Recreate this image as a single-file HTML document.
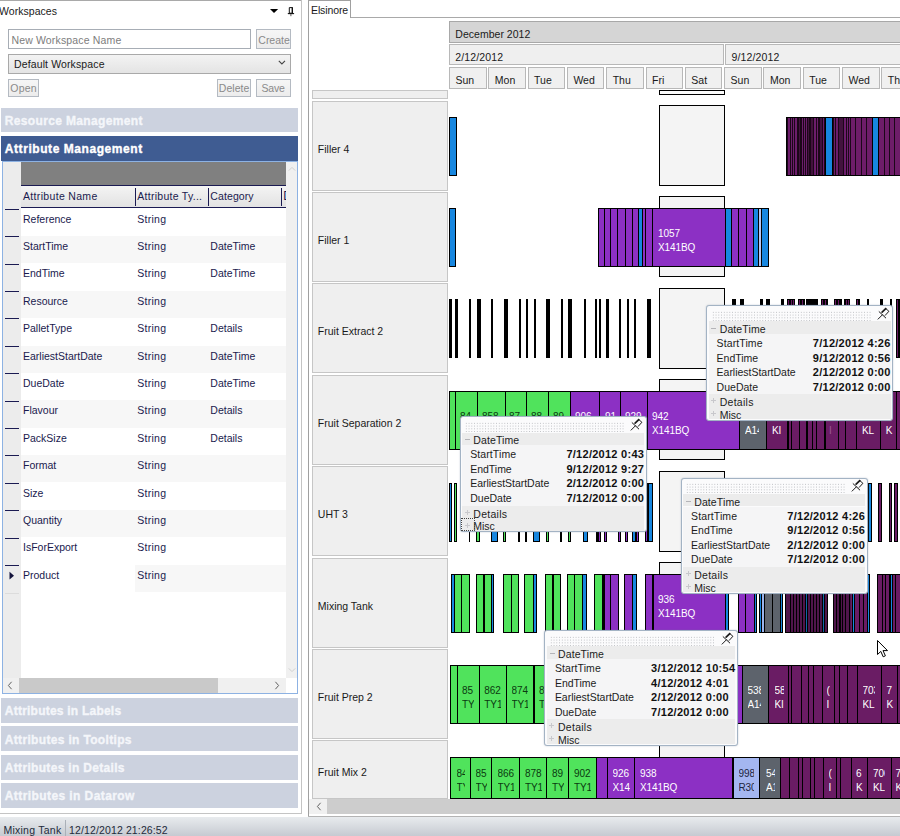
<!DOCTYPE html>
<html><head><meta charset="utf-8"><title>Elsinore</title>
<style>
html,body{margin:0;padding:0}
body{width:900px;height:836px;position:relative;overflow:hidden;background:#fff;font-family:"Liberation Sans",sans-serif;font-size:12px}
body div,body svg{position:absolute}
</style></head><body>
<div style="left:0.00px;top:0.00px;width:302.00px;height:1.00px;background:#a9a9a9;"></div>
<div style="left:301.00px;top:0.00px;width:1.00px;height:814.00px;background:#c4c4c4;"></div>
<div style="left:0.00px;top:813.00px;width:302.00px;height:1.00px;background:#c4c4c4;"></div>
<div style="left:-1.00px;top:3.75px;height:14px;line-height:14px;font-size:10.5px;letter-spacing:0.042px;color:#1a1a1a;white-space:nowrap;">Workspaces</div>
<svg style="left:270px;top:8px" width="10" height="6" viewBox="0 0 10 6"><path d="M-0.2 0.9 L8.2 0.9 L4 5 Z" fill="#000"/></svg>
<svg style="left:287px;top:6px" width="8" height="12" viewBox="0 0 8 12"><path d="M2.3 1.6 H5.5 V7.2 H2.3 Z" fill="none" stroke="#111" stroke-width="1"/><path d="M5.3 1.4 V7.2" stroke="#111" stroke-width="1.4"/><path d="M0.8 7.6 H7.1" stroke="#111" stroke-width="1.1"/><path d="M3.9 8 V10.2" stroke="#555" stroke-width="1"/></svg>
<div style="left:8.00px;top:29.00px;width:243.00px;height:19.50px;background:#fff;border:1px solid #a7adb5;box-sizing:border-box;"></div>
<div style="left:11.40px;top:33.05px;height:14px;line-height:14px;font-size:10.5px;letter-spacing:0.157px;color:#7d7d7d;white-space:nowrap;">New Workspace Name</div>
<div style="left:256.00px;top:29.00px;width:34.70px;height:19.50px;border:1px solid #b4bac2;box-sizing:border-box;background:linear-gradient(#f6f6f6,#ececec);"></div>
<div style="left:258.30px;top:32.65px;height:14px;line-height:14px;font-size:10.5px;letter-spacing:-0.002px;color:#8a8a8a;white-space:nowrap;">Create</div>
<div style="left:8.00px;top:54.30px;width:282.70px;height:19.40px;border:1px solid #a9a9a9;box-sizing:border-box;background:linear-gradient(#f3f3f3,#e4e4e4);"></div>
<div style="left:14.00px;top:57.05px;height:14px;line-height:14px;font-size:10.5px;letter-spacing:0.123px;color:#1a1a1a;white-space:nowrap;">Default Workspace</div>
<svg style="left:278px;top:60px" width="8" height="6" viewBox="0 0 8 6"><path d="M0.8 0.8 L3.9 3.9 L7 0.8" fill="none" stroke="#444" stroke-width="1.1"/></svg>
<div style="left:8.00px;top:78.60px;width:31.00px;height:18.20px;border:1px solid #b4bac2;box-sizing:border-box;background:linear-gradient(#f6f6f6,#ececec);"></div>
<div style="left:10.30px;top:81.35px;height:14px;line-height:14px;font-size:10.5px;letter-spacing:0.204px;color:#8a8a8a;white-space:nowrap;">Open</div>
<div style="left:216.60px;top:78.60px;width:34.40px;height:18.20px;border:1px solid #b4bac2;box-sizing:border-box;background:linear-gradient(#f6f6f6,#ececec);"></div>
<div style="left:218.80px;top:81.35px;height:14px;line-height:14px;font-size:10.5px;letter-spacing:0.025px;color:#8a8a8a;white-space:nowrap;">Delete</div>
<div style="left:256.20px;top:78.60px;width:34.50px;height:18.20px;border:1px solid #b4bac2;box-sizing:border-box;background:linear-gradient(#f6f6f6,#ececec);"></div>
<div style="left:261.50px;top:81.35px;height:14px;line-height:14px;font-size:10.5px;letter-spacing:-0.233px;color:#8a8a8a;white-space:nowrap;">Save</div>
<div style="left:1.00px;top:108.00px;width:297.00px;height:24.00px;background:#ccd2df;"></div>
<div style="left:4.80px;top:112.90px;height:16px;line-height:16px;font-size:12px;letter-spacing:0.349px;color:#f4f6fa;white-space:nowrap;font-weight:bold;-webkit-text-stroke:0.35px;">Resource Management</div>
<div style="left:1.00px;top:136.00px;width:297.00px;height:25.00px;background:#3f5c92;"></div>
<div style="left:4.80px;top:141.40px;height:16px;line-height:16px;font-size:12px;letter-spacing:0.566px;color:#fff;white-space:nowrap;font-weight:bold;-webkit-text-stroke:0.35px;">Attribute Management</div>
<div style="left:1.00px;top:698.00px;width:297.00px;height:25.00px;background:#ccd2df;"></div>
<div style="left:4.80px;top:703.40px;height:16px;line-height:16px;font-size:12px;letter-spacing:0.224px;color:#f4f6fa;white-space:nowrap;font-weight:bold;-webkit-text-stroke:0.35px;">Attributes in Labels</div>
<div style="left:1.00px;top:726.30px;width:297.00px;height:25.00px;background:#ccd2df;"></div>
<div style="left:4.80px;top:731.70px;height:16px;line-height:16px;font-size:12px;letter-spacing:0.329px;color:#f4f6fa;white-space:nowrap;font-weight:bold;-webkit-text-stroke:0.35px;">Attributes in Tooltips</div>
<div style="left:1.00px;top:754.60px;width:297.00px;height:25.00px;background:#ccd2df;"></div>
<div style="left:4.80px;top:760.00px;height:16px;line-height:16px;font-size:12px;letter-spacing:0.317px;color:#f4f6fa;white-space:nowrap;font-weight:bold;-webkit-text-stroke:0.35px;">Attributes in Details</div>
<div style="left:1.00px;top:782.90px;width:297.00px;height:25.00px;background:#ccd2df;"></div>
<div style="left:4.80px;top:788.30px;height:16px;line-height:16px;font-size:12px;letter-spacing:0.412px;color:#f4f6fa;white-space:nowrap;font-weight:bold;-webkit-text-stroke:0.35px;">Attributes in Datarow</div>
<div style="left:2.00px;top:161.00px;width:296.00px;height:533.00px;background:#fff;border:1px solid #8db2e3;box-sizing:border-box;"></div>
<div style="left:3.00px;top:162.00px;width:18.00px;height:516.00px;background:#ececec;"></div>
<div style="left:21.00px;top:162.00px;width:265.00px;height:23.30px;background:#808080;"></div>
<div style="left:21.00px;top:185.30px;width:265.00px;height:1.00px;background:#1a1a52;"></div>
<div style="left:21.00px;top:186.30px;width:265.00px;height:21.00px;background:linear-gradient(#f4f4f4,#e2e2e2);"></div>
<div style="left:21.00px;top:207.30px;width:265.00px;height:1.20px;background:#1a1a52;"></div>
<div style="left:135.00px;top:188.00px;width:1.00px;height:17.60px;background:#1a1a52;"></div>
<div style="left:207.80px;top:188.00px;width:1.00px;height:17.60px;background:#1a1a52;"></div>
<div style="left:281.00px;top:188.00px;width:1.00px;height:17.60px;background:#1a1a52;"></div>
<div style="left:23.00px;top:189.35px;height:14px;line-height:14px;font-size:10.5px;letter-spacing:0.327px;color:#1a1a4e;white-space:nowrap;">Attribute Name</div>
<div style="left:137.30px;top:189.35px;height:14px;line-height:14px;font-size:10.5px;letter-spacing:0.274px;color:#1a1a4e;white-space:nowrap;">Attribute Ty...</div>
<div style="left:210.30px;top:189.35px;height:14px;line-height:14px;font-size:10.5px;letter-spacing:0.100px;color:#1a1a4e;white-space:nowrap;">Category</div>
<div style="left:283px;top:188px;width:3px;height:16px;overflow:hidden"><div style="position:absolute;left:0.3px;top:0;line-height:16px;font-size:12px;color:#1a1a4e">D</div></div>
<div style="left:5.00px;top:209.00px;width:14.00px;height:1.00px;background:#1a1a52;"></div>
<div style="left:23.00px;top:211.65px;height:14px;line-height:14px;font-size:10.5px;letter-spacing:0.000px;color:#1a1a4e;white-space:nowrap;">Reference</div>
<div style="left:137.30px;top:211.65px;height:14px;line-height:14px;font-size:10.5px;letter-spacing:0.262px;color:#1a1a4e;white-space:nowrap;">String</div>
<div style="left:21.00px;top:235.90px;width:265.00px;height:27.40px;background:#f7f7f7;"></div>
<div style="left:5.00px;top:236.00px;width:14.00px;height:1.00px;background:#1a1a52;"></div>
<div style="left:23.00px;top:239.05px;height:14px;line-height:14px;font-size:10.5px;letter-spacing:0.000px;color:#1a1a4e;white-space:nowrap;">StartTime</div>
<div style="left:137.30px;top:239.05px;height:14px;line-height:14px;font-size:10.5px;letter-spacing:0.262px;color:#1a1a4e;white-space:nowrap;">String</div>
<div style="left:210.30px;top:239.05px;height:14px;line-height:14px;font-size:10.5px;letter-spacing:0.000px;color:#1a1a4e;white-space:nowrap;">DateTime</div>
<div style="left:5.00px;top:264.00px;width:14.00px;height:1.00px;background:#1a1a52;"></div>
<div style="left:23.00px;top:266.45px;height:14px;line-height:14px;font-size:10.5px;letter-spacing:0.000px;color:#1a1a4e;white-space:nowrap;">EndTime</div>
<div style="left:137.30px;top:266.45px;height:14px;line-height:14px;font-size:10.5px;letter-spacing:0.262px;color:#1a1a4e;white-space:nowrap;">String</div>
<div style="left:210.30px;top:266.45px;height:14px;line-height:14px;font-size:10.5px;letter-spacing:0.000px;color:#1a1a4e;white-space:nowrap;">DateTime</div>
<div style="left:21.00px;top:290.70px;width:265.00px;height:27.40px;background:#f7f7f7;"></div>
<div style="left:5.00px;top:291.00px;width:14.00px;height:1.00px;background:#1a1a52;"></div>
<div style="left:23.00px;top:293.85px;height:14px;line-height:14px;font-size:10.5px;letter-spacing:0.000px;color:#1a1a4e;white-space:nowrap;">Resource</div>
<div style="left:137.30px;top:293.85px;height:14px;line-height:14px;font-size:10.5px;letter-spacing:0.262px;color:#1a1a4e;white-space:nowrap;">String</div>
<div style="left:5.00px;top:318.00px;width:14.00px;height:1.00px;background:#1a1a52;"></div>
<div style="left:23.00px;top:321.25px;height:14px;line-height:14px;font-size:10.5px;letter-spacing:0.000px;color:#1a1a4e;white-space:nowrap;">PalletType</div>
<div style="left:137.30px;top:321.25px;height:14px;line-height:14px;font-size:10.5px;letter-spacing:0.262px;color:#1a1a4e;white-space:nowrap;">String</div>
<div style="left:210.30px;top:321.25px;height:14px;line-height:14px;font-size:10.5px;letter-spacing:0.000px;color:#1a1a4e;white-space:nowrap;">Details</div>
<div style="left:21.00px;top:345.50px;width:265.00px;height:27.40px;background:#f7f7f7;"></div>
<div style="left:5.00px;top:346.00px;width:14.00px;height:1.00px;background:#1a1a52;"></div>
<div style="left:23.00px;top:348.65px;height:14px;line-height:14px;font-size:10.5px;letter-spacing:0.000px;color:#1a1a4e;white-space:nowrap;">EarliestStartDate</div>
<div style="left:137.30px;top:348.65px;height:14px;line-height:14px;font-size:10.5px;letter-spacing:0.262px;color:#1a1a4e;white-space:nowrap;">String</div>
<div style="left:210.30px;top:348.65px;height:14px;line-height:14px;font-size:10.5px;letter-spacing:0.000px;color:#1a1a4e;white-space:nowrap;">DateTime</div>
<div style="left:5.00px;top:373.00px;width:14.00px;height:1.00px;background:#1a1a52;"></div>
<div style="left:23.00px;top:376.05px;height:14px;line-height:14px;font-size:10.5px;letter-spacing:0.000px;color:#1a1a4e;white-space:nowrap;">DueDate</div>
<div style="left:137.30px;top:376.05px;height:14px;line-height:14px;font-size:10.5px;letter-spacing:0.262px;color:#1a1a4e;white-space:nowrap;">String</div>
<div style="left:210.30px;top:376.05px;height:14px;line-height:14px;font-size:10.5px;letter-spacing:0.000px;color:#1a1a4e;white-space:nowrap;">DateTime</div>
<div style="left:21.00px;top:400.30px;width:265.00px;height:27.40px;background:#f7f7f7;"></div>
<div style="left:5.00px;top:401.00px;width:14.00px;height:1.00px;background:#1a1a52;"></div>
<div style="left:23.00px;top:403.45px;height:14px;line-height:14px;font-size:10.5px;letter-spacing:0.000px;color:#1a1a4e;white-space:nowrap;">Flavour</div>
<div style="left:137.30px;top:403.45px;height:14px;line-height:14px;font-size:10.5px;letter-spacing:0.262px;color:#1a1a4e;white-space:nowrap;">String</div>
<div style="left:210.30px;top:403.45px;height:14px;line-height:14px;font-size:10.5px;letter-spacing:0.000px;color:#1a1a4e;white-space:nowrap;">Details</div>
<div style="left:5.00px;top:428.00px;width:14.00px;height:1.00px;background:#1a1a52;"></div>
<div style="left:23.00px;top:430.85px;height:14px;line-height:14px;font-size:10.5px;letter-spacing:0.000px;color:#1a1a4e;white-space:nowrap;">PackSize</div>
<div style="left:137.30px;top:430.85px;height:14px;line-height:14px;font-size:10.5px;letter-spacing:0.262px;color:#1a1a4e;white-space:nowrap;">String</div>
<div style="left:210.30px;top:430.85px;height:14px;line-height:14px;font-size:10.5px;letter-spacing:0.000px;color:#1a1a4e;white-space:nowrap;">Details</div>
<div style="left:21.00px;top:455.10px;width:265.00px;height:27.40px;background:#f7f7f7;"></div>
<div style="left:5.00px;top:455.00px;width:14.00px;height:1.00px;background:#1a1a52;"></div>
<div style="left:23.00px;top:458.25px;height:14px;line-height:14px;font-size:10.5px;letter-spacing:0.000px;color:#1a1a4e;white-space:nowrap;">Format</div>
<div style="left:137.30px;top:458.25px;height:14px;line-height:14px;font-size:10.5px;letter-spacing:0.262px;color:#1a1a4e;white-space:nowrap;">String</div>
<div style="left:5.00px;top:483.00px;width:14.00px;height:1.00px;background:#1a1a52;"></div>
<div style="left:23.00px;top:485.65px;height:14px;line-height:14px;font-size:10.5px;letter-spacing:0.000px;color:#1a1a4e;white-space:nowrap;">Size</div>
<div style="left:137.30px;top:485.65px;height:14px;line-height:14px;font-size:10.5px;letter-spacing:0.262px;color:#1a1a4e;white-space:nowrap;">String</div>
<div style="left:21.00px;top:509.90px;width:265.00px;height:27.40px;background:#f7f7f7;"></div>
<div style="left:5.00px;top:510.00px;width:14.00px;height:1.00px;background:#1a1a52;"></div>
<div style="left:23.00px;top:513.05px;height:14px;line-height:14px;font-size:10.5px;letter-spacing:0.000px;color:#1a1a4e;white-space:nowrap;">Quantity</div>
<div style="left:137.30px;top:513.05px;height:14px;line-height:14px;font-size:10.5px;letter-spacing:0.262px;color:#1a1a4e;white-space:nowrap;">String</div>
<div style="left:5.00px;top:538.00px;width:14.00px;height:1.00px;background:#1a1a52;"></div>
<div style="left:23.00px;top:540.45px;height:14px;line-height:14px;font-size:10.5px;letter-spacing:0.000px;color:#1a1a4e;white-space:nowrap;">IsForExport</div>
<div style="left:137.30px;top:540.45px;height:14px;line-height:14px;font-size:10.5px;letter-spacing:0.262px;color:#1a1a4e;white-space:nowrap;">String</div>
<div style="left:21.00px;top:564.70px;width:265.00px;height:27.40px;background:#f7f7f7;"></div>
<div style="left:5.00px;top:565.00px;width:14.00px;height:1.00px;background:#1a1a52;"></div>
<div style="left:23.00px;top:567.85px;height:14px;line-height:14px;font-size:10.5px;letter-spacing:0.000px;color:#1a1a4e;white-space:nowrap;">Product</div>
<div style="left:137.30px;top:567.85px;height:14px;line-height:14px;font-size:10.5px;letter-spacing:0.262px;color:#1a1a4e;white-space:nowrap;">String</div>
<div style="left:21.00px;top:564.70px;width:113.50px;height:27.40px;background:#fff;"></div>
<div style="left:23.00px;top:567.85px;height:14px;line-height:14px;font-size:10.5px;letter-spacing:0.000px;color:#1a1a4e;white-space:nowrap;">Product</div>
<div style="left:4.80px;top:592.90px;width:14.40px;height:1.00px;background:#dcdcdc;"></div>
<svg style="left:9px;top:570.7px" width="6" height="10" viewBox="0 0 6 10"><path d="M0.5 0.8 L5 4.7 L0.5 8.6 Z" fill="#14143c"/></svg>
<div style="left:286.20px;top:162.00px;width:11.00px;height:516.00px;background:#f0f0f0;"></div>
<svg style="left:288px;top:166px" width="8" height="6" viewBox="0 0 8 6"><path d="M0.8 4.6 L4 1.4 L7.2 4.6" fill="none" stroke="#d0d0d0" stroke-width="1"/></svg>
<svg style="left:288px;top:667px" width="8" height="6" viewBox="0 0 8 6"><path d="M0.8 1.4 L4 4.6 L7.2 1.4" fill="none" stroke="#d0d0d0" stroke-width="1"/></svg>
<div style="left:3.00px;top:678.00px;width:283.20px;height:15.40px;background:#f0f0f0;"></div>
<div style="left:19.00px;top:678.00px;width:199.00px;height:15.40px;background:#c9c9c9;"></div>
<svg style="left:7px;top:681px" width="6" height="9" viewBox="0 0 6 9"><path d="M4.6 0.8 L1.4 4.5 L4.6 8.2" fill="none" stroke="#606060" stroke-width="1"/></svg>
<svg style="left:274px;top:681px" width="6" height="9" viewBox="0 0 6 9"><path d="M1.4 0.8 L4.6 4.5 L1.4 8.2" fill="none" stroke="#606060" stroke-width="1"/></svg>
<div style="left:308.00px;top:0.00px;width:1.00px;height:817.00px;background:#a0a0a0;"></div>
<div style="left:308.00px;top:0.00px;width:43.00px;height:1.00px;background:#a0a0a0;"></div>
<div style="left:350.40px;top:0.00px;width:1.00px;height:18.00px;background:#a0a0a0;"></div>
<div style="left:351.00px;top:17.00px;width:549.00px;height:1.00px;background:#a9a9a9;"></div>
<div style="left:311.00px;top:3.15px;height:14px;line-height:14px;font-size:10.5px;letter-spacing:-0.117px;color:#1a1a1a;white-space:nowrap;">Elsinore</div>
<div style="left:449.00px;top:21.40px;width:460.00px;height:21.30px;background:#d5d5d5;border:1px solid #a8a8a8;box-sizing:border-box;"></div>
<div style="left:455.30px;top:27.35px;height:14px;line-height:14px;font-size:10.5px;letter-spacing:0.023px;color:#1a1a1a;white-space:nowrap;">December 2012</div>
<div style="left:449.00px;top:44.40px;width:275.20px;height:21.00px;background:#efefef;border:1px solid #b8b8b8;box-sizing:border-box;"></div>
<div style="left:725.00px;top:44.40px;width:275.00px;height:21.00px;background:#efefef;border:1px solid #b8b8b8;box-sizing:border-box;"></div>
<div style="left:455.30px;top:50.35px;height:14px;line-height:14px;font-size:10.5px;letter-spacing:0.144px;color:#1a1a1a;white-space:nowrap;">2/12/2012</div>
<div style="left:731.50px;top:50.35px;height:14px;line-height:14px;font-size:10.5px;letter-spacing:0.144px;color:#1a1a1a;white-space:nowrap;">9/12/2012</div>
<div style="left:449.00px;top:67.40px;width:37.50px;height:21.60px;background:#f0f0f0;border:1px solid #b8b8b8;box-sizing:border-box;"></div>
<div style="left:455.50px;top:73.35px;height:14px;line-height:14px;font-size:10.5px;letter-spacing:0.000px;color:#1a1a1a;white-space:nowrap;">Sun</div>
<div style="left:488.30px;top:67.40px;width:37.50px;height:21.60px;background:#f0f0f0;border:1px solid #b8b8b8;box-sizing:border-box;"></div>
<div style="left:494.80px;top:73.35px;height:14px;line-height:14px;font-size:10.5px;letter-spacing:0.000px;color:#1a1a1a;white-space:nowrap;">Mon</div>
<div style="left:527.60px;top:67.40px;width:37.50px;height:21.60px;background:#f0f0f0;border:1px solid #b8b8b8;box-sizing:border-box;"></div>
<div style="left:534.10px;top:73.35px;height:14px;line-height:14px;font-size:10.5px;letter-spacing:0.000px;color:#1a1a1a;white-space:nowrap;">Tue</div>
<div style="left:566.90px;top:67.40px;width:37.50px;height:21.60px;background:#f0f0f0;border:1px solid #b8b8b8;box-sizing:border-box;"></div>
<div style="left:573.40px;top:73.35px;height:14px;line-height:14px;font-size:10.5px;letter-spacing:0.000px;color:#1a1a1a;white-space:nowrap;">Wed</div>
<div style="left:606.20px;top:67.40px;width:37.50px;height:21.60px;background:#f0f0f0;border:1px solid #b8b8b8;box-sizing:border-box;"></div>
<div style="left:612.70px;top:73.35px;height:14px;line-height:14px;font-size:10.5px;letter-spacing:0.000px;color:#1a1a1a;white-space:nowrap;">Thu</div>
<div style="left:645.50px;top:67.40px;width:37.50px;height:21.60px;background:#f0f0f0;border:1px solid #b8b8b8;box-sizing:border-box;"></div>
<div style="left:652.00px;top:73.35px;height:14px;line-height:14px;font-size:10.5px;letter-spacing:0.000px;color:#1a1a1a;white-space:nowrap;">Fri</div>
<div style="left:684.80px;top:67.40px;width:37.50px;height:21.60px;background:#f0f0f0;border:1px solid #b8b8b8;box-sizing:border-box;"></div>
<div style="left:691.30px;top:73.35px;height:14px;line-height:14px;font-size:10.5px;letter-spacing:0.000px;color:#1a1a1a;white-space:nowrap;">Sat</div>
<div style="left:724.10px;top:67.40px;width:37.50px;height:21.60px;background:#f0f0f0;border:1px solid #b8b8b8;box-sizing:border-box;"></div>
<div style="left:730.60px;top:73.35px;height:14px;line-height:14px;font-size:10.5px;letter-spacing:0.000px;color:#1a1a1a;white-space:nowrap;">Sun</div>
<div style="left:763.40px;top:67.40px;width:37.50px;height:21.60px;background:#f0f0f0;border:1px solid #b8b8b8;box-sizing:border-box;"></div>
<div style="left:769.90px;top:73.35px;height:14px;line-height:14px;font-size:10.5px;letter-spacing:0.000px;color:#1a1a1a;white-space:nowrap;">Mon</div>
<div style="left:802.70px;top:67.40px;width:37.50px;height:21.60px;background:#f0f0f0;border:1px solid #b8b8b8;box-sizing:border-box;"></div>
<div style="left:809.20px;top:73.35px;height:14px;line-height:14px;font-size:10.5px;letter-spacing:0.000px;color:#1a1a1a;white-space:nowrap;">Tue</div>
<div style="left:842.00px;top:67.40px;width:37.50px;height:21.60px;background:#f0f0f0;border:1px solid #b8b8b8;box-sizing:border-box;"></div>
<div style="left:848.50px;top:73.35px;height:14px;line-height:14px;font-size:10.5px;letter-spacing:0.000px;color:#1a1a1a;white-space:nowrap;">Wed</div>
<div style="left:881.30px;top:67.40px;width:37.50px;height:21.60px;background:#f0f0f0;border:1px solid #b8b8b8;box-sizing:border-box;"></div>
<div style="left:887.80px;top:73.35px;height:14px;line-height:14px;font-size:10.5px;letter-spacing:0.000px;color:#1a1a1a;white-space:nowrap;">Thu</div>
<div style="left:311.60px;top:90.30px;width:136.00px;height:8.40px;background:#efefef;border:1px solid #c6c6c6;box-sizing:border-box;"></div>
<div style="left:311.60px;top:100.60px;width:136.00px;height:90.00px;background:#efefef;border:1px solid #c6c6c6;box-sizing:border-box;"></div>
<div style="left:317.80px;top:141.55px;height:14px;line-height:14px;font-size:10.5px;letter-spacing:0.000px;color:#1a1a1a;white-space:nowrap;">Filler 4</div>
<div style="left:311.60px;top:192.00px;width:136.00px;height:90.00px;background:#efefef;border:1px solid #c6c6c6;box-sizing:border-box;"></div>
<div style="left:317.80px;top:232.95px;height:14px;line-height:14px;font-size:10.5px;letter-spacing:0.000px;color:#1a1a1a;white-space:nowrap;">Filler 1</div>
<div style="left:311.60px;top:283.40px;width:136.00px;height:90.00px;background:#efefef;border:1px solid #c6c6c6;box-sizing:border-box;"></div>
<div style="left:317.80px;top:324.35px;height:14px;line-height:14px;font-size:10.5px;letter-spacing:0.000px;color:#1a1a1a;white-space:nowrap;">Fruit Extract 2</div>
<div style="left:311.60px;top:374.80px;width:136.00px;height:90.00px;background:#efefef;border:1px solid #c6c6c6;box-sizing:border-box;"></div>
<div style="left:317.80px;top:415.75px;height:14px;line-height:14px;font-size:10.5px;letter-spacing:0.000px;color:#1a1a1a;white-space:nowrap;">Fruit Separation 2</div>
<div style="left:311.60px;top:466.20px;width:136.00px;height:90.00px;background:#efefef;border:1px solid #c6c6c6;box-sizing:border-box;"></div>
<div style="left:317.80px;top:507.15px;height:14px;line-height:14px;font-size:10.5px;letter-spacing:0.000px;color:#1a1a1a;white-space:nowrap;">UHT 3</div>
<div style="left:311.60px;top:557.60px;width:136.00px;height:90.00px;background:#efefef;border:1px solid #c6c6c6;box-sizing:border-box;"></div>
<div style="left:317.80px;top:598.55px;height:14px;line-height:14px;font-size:10.5px;letter-spacing:0.000px;color:#1a1a1a;white-space:nowrap;">Mixing Tank</div>
<div style="left:311.60px;top:649.00px;width:136.00px;height:90.00px;background:#efefef;border:1px solid #c6c6c6;box-sizing:border-box;"></div>
<div style="left:317.80px;top:689.95px;height:14px;line-height:14px;font-size:10.5px;letter-spacing:0.000px;color:#1a1a1a;white-space:nowrap;">Fruit Prep 2</div>
<div style="left:311.60px;top:740.40px;width:136.00px;height:58.60px;background:#efefef;border:1px solid #c6c6c6;box-sizing:border-box;"></div>
<div style="left:317.80px;top:765.05px;height:14px;line-height:14px;font-size:10.5px;letter-spacing:0.000px;color:#1a1a1a;white-space:nowrap;">Fruit Mix 2</div>
<div style="left:659.00px;top:90.00px;width:66.00px;height:5.00px;background:#fbfbfb;border:1px solid #000;box-sizing:border-box;"></div>
<div style="left:659.00px;top:105.00px;width:65.70px;height:81.00px;background:#f4f4f4;border:1px solid #000;box-sizing:border-box;"></div>
<div style="left:659.00px;top:196.40px;width:65.70px;height:81.00px;background:#f4f4f4;border:1px solid #000;box-sizing:border-box;"></div>
<div style="left:659.00px;top:287.80px;width:65.70px;height:81.00px;background:#f4f4f4;border:1px solid #000;box-sizing:border-box;"></div>
<div style="left:659.00px;top:379.20px;width:65.70px;height:81.00px;background:#f4f4f4;border:1px solid #000;box-sizing:border-box;"></div>
<div style="left:659.00px;top:470.60px;width:65.70px;height:81.00px;background:#f4f4f4;border:1px solid #000;box-sizing:border-box;"></div>
<div style="left:659.00px;top:562.00px;width:65.70px;height:81.00px;background:#f4f4f4;border:1px solid #000;box-sizing:border-box;"></div>
<div style="left:659.00px;top:653.40px;width:65.70px;height:81.00px;background:#f4f4f4;border:1px solid #000;box-sizing:border-box;"></div>
<div style="left:659.00px;top:744.80px;width:65.70px;height:56.20px;background:#f4f4f4;border:1px solid #000;box-sizing:border-box;"></div>
<div style="left:449.00px;top:117.00px;width:7.80px;height:59.00px;background:#1787e0;border:1px solid #000;box-sizing:border-box;"></div>
<div style="left:786.00px;top:117.00px;width:120.00px;height:59.00px;background:#1c0719;border:1px solid #000;box-sizing:border-box;"></div>
<div style="left:787.73px;top:118.00px;width:1.87px;height:57.00px;background:#6c1d6c;"></div>
<div style="left:790.67px;top:118.00px;width:1.33px;height:57.00px;background:#6c1d6c;"></div>
<div style="left:792.67px;top:118.00px;width:1.00px;height:57.00px;background:#6c1d6c;"></div>
<div style="left:794.93px;top:118.00px;width:1.73px;height:57.00px;background:#6c1d6c;"></div>
<div style="left:798.67px;top:118.00px;width:1.33px;height:57.00px;background:#42123e;"></div>
<div style="left:802.00px;top:118.00px;width:1.33px;height:57.00px;background:#6c1d6c;"></div>
<div style="left:804.27px;top:118.00px;width:1.00px;height:57.00px;background:#6c1d6c;"></div>
<div style="left:806.00px;top:118.00px;width:1.33px;height:57.00px;background:#6c1d6c;"></div>
<div style="left:808.27px;top:118.00px;width:1.07px;height:57.00px;background:#42123e;"></div>
<div style="left:811.33px;top:118.00px;width:1.33px;height:57.00px;background:#42123e;"></div>
<div style="left:814.00px;top:118.00px;width:1.73px;height:57.00px;background:#6c1d6c;"></div>
<div style="left:817.07px;top:118.00px;width:1.33px;height:57.00px;background:#6c1d6c;"></div>
<div style="left:820.00px;top:118.00px;width:2.00px;height:57.00px;background:#42123e;"></div>
<div style="left:822.93px;top:118.00px;width:1.07px;height:57.00px;background:#6c1d6c;"></div>
<div style="left:834.00px;top:118.00px;width:1.00px;height:57.00px;background:#6c1d6c;"></div>
<div style="left:836.00px;top:118.00px;width:1.60px;height:57.00px;background:#6c1d6c;"></div>
<div style="left:839.33px;top:118.00px;width:3.33px;height:57.00px;background:#42123e;"></div>
<div style="left:844.00px;top:118.00px;width:1.60px;height:57.00px;background:#6c1d6c;"></div>
<div style="left:846.67px;top:118.00px;width:1.07px;height:57.00px;background:#6c1d6c;"></div>
<div style="left:848.67px;top:118.00px;width:1.33px;height:57.00px;background:#6c1d6c;"></div>
<div style="left:825.33px;top:117.00px;width:7.60px;height:59.00px;background:#1787e0;border:1px solid #000;box-sizing:border-box;"></div>
<div style="left:851.07px;top:118.00px;width:3.87px;height:57.00px;background:#6e1d69;"></div>
<div style="left:856.00px;top:118.00px;width:5.07px;height:57.00px;background:#6e1d69;"></div>
<div style="left:862.00px;top:118.00px;width:4.00px;height:57.00px;background:#6e1d69;"></div>
<div style="left:866.93px;top:118.00px;width:4.80px;height:57.00px;background:#6e1d69;"></div>
<div style="left:878.93px;top:118.00px;width:5.07px;height:57.00px;background:#6e1d69;"></div>
<div style="left:884.93px;top:118.00px;width:4.13px;height:57.00px;background:#6e1d69;"></div>
<div style="left:890.00px;top:118.00px;width:4.40px;height:57.00px;background:#6e1d69;"></div>
<div style="left:895.47px;top:118.00px;width:5.20px;height:57.00px;background:#6e1d69;"></div>
<div style="left:872.27px;top:117.00px;width:6.40px;height:59.00px;background:#1787e0;border:1px solid #000;box-sizing:border-box;"></div>
<div style="left:449.00px;top:208.00px;width:6.50px;height:59.00px;background:#1787e0;border:1px solid #000;box-sizing:border-box;"></div>
<div style="left:598.33px;top:208.00px;width:6.62px;height:59.00px;background:#8c30c4;border:1px solid #000;box-sizing:border-box;"></div>
<div style="left:603.95px;top:208.00px;width:7.11px;height:59.00px;background:#8c30c4;border:1px solid #000;box-sizing:border-box;"></div>
<div style="left:610.06px;top:208.00px;width:8.33px;height:59.00px;background:#8c30c4;border:1px solid #000;box-sizing:border-box;"></div>
<div style="left:617.40px;top:208.00px;width:8.82px;height:59.00px;background:#8c30c4;border:1px solid #000;box-sizing:border-box;"></div>
<div style="left:625.22px;top:208.00px;width:7.85px;height:59.00px;background:#8c30c4;border:1px solid #000;box-sizing:border-box;"></div>
<div style="left:632.07px;top:208.00px;width:7.11px;height:59.00px;background:#8c30c4;border:1px solid #000;box-sizing:border-box;"></div>
<div style="left:638.18px;top:208.00px;width:5.16px;height:59.00px;background:#1787e0;border:1px solid #000;box-sizing:border-box;"></div>
<div style="left:642.34px;top:208.00px;width:3.69px;height:59.00px;background:#8c30c4;border:1px solid #000;box-sizing:border-box;"></div>
<div style="left:645.03px;top:208.00px;width:8.09px;height:59.00px;background:#8c30c4;border:1px solid #000;box-sizing:border-box;"></div>
<div style="left:652.12px;top:208.00px;width:73.86px;height:59.00px;background:#8c30c4;border:1px solid #000;box-sizing:border-box;"></div>
<div style="left:724.98px;top:208.00px;width:7.11px;height:59.00px;background:#1787e0;border:1px solid #000;box-sizing:border-box;"></div>
<div style="left:731.09px;top:208.00px;width:7.85px;height:59.00px;background:#8c30c4;border:1px solid #000;box-sizing:border-box;"></div>
<div style="left:737.94px;top:208.00px;width:8.82px;height:59.00px;background:#8c30c4;border:1px solid #000;box-sizing:border-box;"></div>
<div style="left:745.76px;top:208.00px;width:8.33px;height:59.00px;background:#8c30c4;border:1px solid #000;box-sizing:border-box;"></div>
<div style="left:753.09px;top:208.00px;width:6.38px;height:59.00px;background:#1787e0;border:1px solid #000;box-sizing:border-box;"></div>
<div style="left:758.47px;top:208.00px;width:3.44px;height:59.00px;background:#b8c8f4;border:1px solid #000;box-sizing:border-box;"></div>
<div style="left:760.92px;top:208.00px;width:7.85px;height:59.00px;background:#1787e0;border:1px solid #000;box-sizing:border-box;"></div>
<div style="left:658.00px;top:226.80px;font-size:10px;line-height:14px;letter-spacing:-0.100px;color:#fff;white-space:nowrap;">1057<br>X141BQ</div>
<div style="left:448.94px;top:299.00px;width:3.32px;height:59.00px;background:#000;"></div>
<div style="left:454.82px;top:299.00px;width:3.58px;height:59.00px;background:#000;"></div>
<div style="left:469.39px;top:299.00px;width:2.04px;height:59.00px;background:#000;"></div>
<div style="left:477.06px;top:299.00px;width:3.83px;height:59.00px;background:#000;"></div>
<div style="left:491.11px;top:299.00px;width:2.04px;height:59.00px;background:#000;"></div>
<div style="left:503.89px;top:299.00px;width:4.09px;height:59.00px;background:#000;"></div>
<div style="left:518.71px;top:299.00px;width:2.04px;height:59.00px;background:#000;"></div>
<div style="left:525.87px;top:299.00px;width:2.04px;height:59.00px;background:#000;"></div>
<div style="left:533.53px;top:299.00px;width:2.04px;height:59.00px;background:#000;"></div>
<div style="left:546.06px;top:299.00px;width:3.83px;height:59.00px;background:#000;"></div>
<div style="left:560.62px;top:299.00px;width:2.04px;height:59.00px;background:#000;"></div>
<div style="left:567.78px;top:299.00px;width:4.09px;height:59.00px;background:#000;"></div>
<div style="left:583.62px;top:299.00px;width:2.04px;height:59.00px;background:#000;"></div>
<div style="left:595.38px;top:299.00px;width:2.04px;height:59.00px;background:#000;"></div>
<div style="left:598.70px;top:299.00px;width:2.56px;height:59.00px;background:#000;"></div>
<div style="left:606.11px;top:299.00px;width:2.56px;height:59.00px;background:#000;"></div>
<div style="left:619.15px;top:299.00px;width:2.04px;height:59.00px;background:#000;"></div>
<div style="left:626.81px;top:299.00px;width:2.04px;height:59.00px;background:#000;"></div>
<div style="left:633.97px;top:299.00px;width:2.04px;height:59.00px;background:#000;"></div>
<div style="left:647.00px;top:299.00px;width:3.58px;height:59.00px;background:#000;"></div>
<div style="left:732.40px;top:299.00px;width:3.20px;height:59.00px;background:#000;"></div>
<div style="left:739.60px;top:299.00px;width:4.00px;height:59.00px;background:#000;"></div>
<div style="left:760.00px;top:299.00px;width:3.00px;height:59.00px;background:#000;"></div>
<div style="left:766.40px;top:299.00px;width:3.60px;height:59.00px;background:#000;"></div>
<div style="left:781.00px;top:299.00px;width:3.00px;height:59.00px;background:#000;"></div>
<div style="left:786.60px;top:299.00px;width:8.40px;height:59.00px;background:#000;"></div>
<div style="left:788.00px;top:300.00px;width:1.00px;height:57.00px;background:#6a1c64;"></div>
<div style="left:791.00px;top:300.00px;width:1.00px;height:57.00px;background:#6a1c64;"></div>
<div style="left:793.00px;top:300.00px;width:1.00px;height:57.00px;background:#6a1c64;"></div>
<div style="left:797.60px;top:299.00px;width:7.40px;height:59.00px;background:#000;"></div>
<div style="left:799.00px;top:300.00px;width:1.00px;height:57.00px;background:#6a1c64;"></div>
<div style="left:802.00px;top:300.00px;width:1.00px;height:57.00px;background:#6a1c64;"></div>
<div style="left:806.00px;top:299.00px;width:12.00px;height:59.00px;background:#000;"></div>
<div style="left:821.00px;top:299.00px;width:7.00px;height:59.00px;background:#000;"></div>
<div style="left:822.00px;top:300.00px;width:1.00px;height:57.00px;background:#6a1c64;"></div>
<div style="left:825.00px;top:300.00px;width:1.00px;height:57.00px;background:#6a1c64;"></div>
<div style="left:834.00px;top:299.00px;width:8.00px;height:59.00px;background:#000;"></div>
<div style="left:835.00px;top:300.00px;width:1.00px;height:57.00px;background:#6a1c64;"></div>
<div style="left:838.00px;top:300.00px;width:1.00px;height:57.00px;background:#6a1c64;"></div>
<div style="left:844.40px;top:299.00px;width:5.60px;height:59.00px;background:#000;"></div>
<div style="left:846.00px;top:300.00px;width:1.00px;height:57.00px;background:#6a1c64;"></div>
<div style="left:848.00px;top:300.00px;width:1.00px;height:57.00px;background:#6a1c64;"></div>
<div style="left:856.00px;top:299.00px;width:3.60px;height:59.00px;background:#000;"></div>
<div style="left:857.00px;top:300.00px;width:1.00px;height:57.00px;background:#6a1c64;"></div>
<div style="left:867.00px;top:299.00px;width:2.00px;height:59.00px;background:#000;"></div>
<div style="left:880.00px;top:299.00px;width:3.00px;height:59.00px;background:#000;"></div>
<div style="left:890.40px;top:299.00px;width:2.00px;height:59.00px;background:#000;"></div>
<div style="left:896.00px;top:299.00px;width:5.00px;height:59.00px;background:#000;"></div>
<div style="left:897.00px;top:300.00px;width:1.00px;height:57.00px;background:#6a1c64;"></div>
<div style="left:448.80px;top:391.00px;width:7.50px;height:59.00px;background:#50e35c;border:1px solid #000;box-sizing:border-box;"></div>
<div style="left:455.30px;top:391.00px;width:23.00px;height:59.00px;background:#50e35c;border:1px solid #000;box-sizing:border-box;"></div>
<div style="left:477.30px;top:391.00px;width:28.40px;height:59.00px;background:#50e35c;border:1px solid #000;box-sizing:border-box;"></div>
<div style="left:504.70px;top:391.00px;width:22.70px;height:59.00px;background:#50e35c;border:1px solid #000;box-sizing:border-box;"></div>
<div style="left:526.40px;top:391.00px;width:22.70px;height:59.00px;background:#50e35c;border:1px solid #000;box-sizing:border-box;"></div>
<div style="left:548.10px;top:391.00px;width:22.70px;height:59.00px;background:#50e35c;border:1px solid #000;box-sizing:border-box;"></div>
<div style="left:569.80px;top:391.00px;width:30.40px;height:59.00px;background:#8c30c4;border:1px solid #000;box-sizing:border-box;"></div>
<div style="left:599.20px;top:391.00px;width:21.50px;height:59.00px;background:#8c30c4;border:1px solid #000;box-sizing:border-box;"></div>
<div style="left:619.70px;top:391.00px;width:28.30px;height:59.00px;background:#8c30c4;border:1px solid #000;box-sizing:border-box;"></div>
<div style="left:647.00px;top:391.00px;width:93.20px;height:59.00px;background:#8c30c4;border:1px solid #000;box-sizing:border-box;"></div>
<div style="left:739.20px;top:391.00px;width:27.90px;height:59.00px;background:#5d636c;border:1px solid #000;box-sizing:border-box;"></div>
<div style="left:766.10px;top:391.00px;width:22.40px;height:59.00px;background:#6a1c64;border:1px solid #000;box-sizing:border-box;"></div>
<div style="left:787.50px;top:391.00px;width:4.00px;height:59.00px;background:#6a1c64;border:1px solid #000;box-sizing:border-box;"></div>
<div style="left:790.50px;top:391.00px;width:9.80px;height:59.00px;background:#6a1c64;border:1px solid #000;box-sizing:border-box;"></div>
<div style="left:799.30px;top:391.00px;width:8.20px;height:59.00px;background:#6a1c64;border:1px solid #000;box-sizing:border-box;"></div>
<div style="left:806.50px;top:391.00px;width:6.50px;height:59.00px;background:#6a1c64;border:1px solid #000;box-sizing:border-box;"></div>
<div style="left:812.00px;top:391.00px;width:5.40px;height:59.00px;background:#6a1c64;border:1px solid #000;box-sizing:border-box;"></div>
<div style="left:816.40px;top:391.00px;width:9.10px;height:59.00px;background:#6a1c64;border:1px solid #000;box-sizing:border-box;"></div>
<div style="left:824.50px;top:391.00px;width:14.00px;height:59.00px;background:#6a1c64;border:1px solid #000;box-sizing:border-box;"></div>
<div style="left:837.50px;top:391.00px;width:8.80px;height:59.00px;background:#6a1c64;border:1px solid #000;box-sizing:border-box;"></div>
<div style="left:845.30px;top:391.00px;width:12.00px;height:59.00px;background:#6a1c64;border:1px solid #000;box-sizing:border-box;"></div>
<div style="left:856.30px;top:391.00px;width:24.70px;height:59.00px;background:#6a1c64;border:1px solid #000;box-sizing:border-box;"></div>
<div style="left:880.00px;top:391.00px;width:17.10px;height:59.00px;background:#6a1c64;border:1px solid #000;box-sizing:border-box;"></div>
<div style="left:896.10px;top:391.00px;width:14.40px;height:59.00px;background:#6a1c64;border:1px solid #000;box-sizing:border-box;"></div>
<div style="left:460.00px;top:409.80px;font-size:10px;line-height:14px;letter-spacing:-0.088px;color:#0b3a10;white-space:nowrap;">84</div>
<div style="left:482.00px;top:409.80px;font-size:10px;line-height:14px;letter-spacing:-0.088px;color:#0b3a10;white-space:nowrap;">858</div>
<div style="left:509.00px;top:409.80px;font-size:10px;line-height:14px;letter-spacing:-0.088px;color:#0b3a10;white-space:nowrap;">87</div>
<div style="left:531.00px;top:409.80px;font-size:10px;line-height:14px;letter-spacing:-0.088px;color:#0b3a10;white-space:nowrap;">88</div>
<div style="left:553.00px;top:409.80px;font-size:10px;line-height:14px;letter-spacing:-0.088px;color:#0b3a10;white-space:nowrap;">89</div>
<div style="left:575.00px;top:409.80px;font-size:10px;line-height:14px;letter-spacing:-0.088px;color:#fff;white-space:nowrap;">906</div>
<div style="left:605.00px;top:409.80px;font-size:10px;line-height:14px;letter-spacing:-0.088px;color:#fff;white-space:nowrap;">91</div>
<div style="left:625.00px;top:409.80px;font-size:10px;line-height:14px;letter-spacing:-0.088px;color:#fff;white-space:nowrap;">929</div>
<div style="left:652.00px;top:409.80px;font-size:10px;line-height:14px;letter-spacing:-0.100px;color:#fff;white-space:nowrap;">942<br>X141BQ</div>
<div style="left:745.00px;top:423.80px;width:14.00px;overflow:hidden;font-size:10px;line-height:14px;letter-spacing:-0.094px;color:#fff;white-space:nowrap;">A14</div>
<div style="left:829.00px;top:423.80px;font-size:10px;line-height:14px;letter-spacing:-0.044px;color:#9a5a96;white-space:nowrap;">I</div>
<div style="left:772.00px;top:423.80px;font-size:10px;line-height:14px;letter-spacing:-0.075px;color:#fff;white-space:nowrap;">KI</div>
<div style="left:862.00px;top:423.80px;font-size:10px;line-height:14px;letter-spacing:-0.097px;color:#fff;white-space:nowrap;">KL</div>
<div style="left:885.70px;top:423.80px;font-size:10px;line-height:14px;letter-spacing:-0.106px;color:#fff;white-space:nowrap;">K</div>
<div style="left:449.00px;top:483.00px;width:3.00px;height:59.00px;background:#1787e0;border:1px solid #000;box-sizing:border-box;"></div>
<div style="left:454.00px;top:483.00px;width:3.00px;height:59.00px;background:#50e35c;border:1px solid #000;box-sizing:border-box;"></div>
<div style="left:468.62px;top:483.00px;width:1.53px;height:59.00px;background:#000;"></div>
<div style="left:475.78px;top:483.00px;width:3.83px;height:59.00px;background:#50e35c;border:1px solid #000;box-sizing:border-box;"></div>
<div style="left:491.11px;top:483.00px;width:6.90px;height:59.00px;background:#1787e0;border:1px solid #000;box-sizing:border-box;"></div>
<div style="left:503.00px;top:483.00px;width:3.00px;height:59.00px;background:#50e35c;border:1px solid #000;box-sizing:border-box;"></div>
<div style="left:517.95px;top:483.00px;width:1.79px;height:59.00px;background:#000;"></div>
<div style="left:525.10px;top:483.00px;width:1.79px;height:59.00px;background:#000;"></div>
<div style="left:533.28px;top:483.00px;width:6.39px;height:59.00px;background:#1787e0;border:1px solid #000;box-sizing:border-box;"></div>
<div style="left:546.00px;top:483.00px;width:3.00px;height:59.00px;background:#50e35c;border:1px solid #000;box-sizing:border-box;"></div>
<div style="left:560.11px;top:483.00px;width:1.79px;height:59.00px;background:#000;"></div>
<div style="left:568.00px;top:483.00px;width:3.00px;height:59.00px;background:#50e35c;border:1px solid #000;box-sizing:border-box;"></div>
<div style="left:582.60px;top:483.00px;width:5.62px;height:59.00px;background:#1787e0;border:1px solid #000;box-sizing:border-box;"></div>
<div style="left:595.89px;top:483.00px;width:2.56px;height:59.00px;background:#000;border:1px solid #000;box-sizing:border-box;"></div>
<div style="left:598.00px;top:483.00px;width:3.00px;height:59.00px;background:#8c30c4;border:1px solid #000;box-sizing:border-box;"></div>
<div style="left:604.00px;top:483.00px;width:3.00px;height:59.00px;background:#8c30c4;border:1px solid #000;box-sizing:border-box;"></div>
<div style="left:618.00px;top:483.00px;width:3.00px;height:59.00px;background:#8c30c4;border:1px solid #000;box-sizing:border-box;"></div>
<div style="left:625.00px;top:483.00px;width:3.00px;height:59.00px;background:#8c30c4;border:1px solid #000;box-sizing:border-box;"></div>
<div style="left:632.18px;top:483.00px;width:3.58px;height:59.00px;background:#1787e0;border:1px solid #000;box-sizing:border-box;"></div>
<div style="left:635.50px;top:483.00px;width:3.83px;height:59.00px;background:#8c30c4;border:1px solid #000;box-sizing:border-box;"></div>
<div style="left:645.00px;top:483.00px;width:3.00px;height:59.00px;background:#8c30c4;border:1px solid #000;box-sizing:border-box;"></div>
<div style="left:648.28px;top:483.00px;width:4.34px;height:59.00px;background:#1787e0;border:1px solid #000;box-sizing:border-box;"></div>
<div style="left:867.70px;top:483.00px;width:4.50px;height:59.00px;background:#1787e0;border:1px solid #000;box-sizing:border-box;"></div>
<div style="left:878.00px;top:483.00px;width:3.60px;height:59.00px;background:#6a1c64;border:1px solid #000;box-sizing:border-box;"></div>
<div style="left:889.00px;top:483.00px;width:3.00px;height:59.00px;background:#6a1c64;border:1px solid #000;box-sizing:border-box;"></div>
<div style="left:893.70px;top:483.00px;width:4.10px;height:59.00px;background:#6a1c64;border:1px solid #000;box-sizing:border-box;"></div>
<div style="left:450.80px;top:574.00px;width:4.07px;height:59.00px;background:#1787e0;border:1px solid #000;box-sizing:border-box;"></div>
<div style="left:453.87px;top:574.00px;width:8.41px;height:59.00px;background:#50e35c;border:1px solid #000;box-sizing:border-box;"></div>
<div style="left:461.28px;top:574.00px;width:8.92px;height:59.00px;background:#50e35c;border:1px solid #000;box-sizing:border-box;"></div>
<div style="left:475.59px;top:574.00px;width:8.92px;height:59.00px;background:#50e35c;border:1px solid #000;box-sizing:border-box;"></div>
<div style="left:483.51px;top:574.00px;width:8.67px;height:59.00px;background:#50e35c;border:1px solid #000;box-sizing:border-box;"></div>
<div style="left:491.18px;top:574.00px;width:3.30px;height:59.00px;background:#1787e0;border:1px solid #000;box-sizing:border-box;"></div>
<div style="left:502.68px;top:574.00px;width:8.92px;height:59.00px;background:#50e35c;border:1px solid #000;box-sizing:border-box;"></div>
<div style="left:510.60px;top:574.00px;width:8.41px;height:59.00px;background:#50e35c;border:1px solid #000;box-sizing:border-box;"></div>
<div style="left:524.40px;top:574.00px;width:9.43px;height:59.00px;background:#50e35c;border:1px solid #000;box-sizing:border-box;"></div>
<div style="left:532.83px;top:574.00px;width:3.81px;height:59.00px;background:#1787e0;border:1px solid #000;box-sizing:border-box;"></div>
<div style="left:544.59px;top:574.00px;width:8.92px;height:59.00px;background:#50e35c;border:1px solid #000;box-sizing:border-box;"></div>
<div style="left:552.51px;top:574.00px;width:8.67px;height:59.00px;background:#50e35c;border:1px solid #000;box-sizing:border-box;"></div>
<div style="left:566.57px;top:574.00px;width:8.92px;height:59.00px;background:#50e35c;border:1px solid #000;box-sizing:border-box;"></div>
<div style="left:574.49px;top:574.00px;width:8.67px;height:59.00px;background:#50e35c;border:1px solid #000;box-sizing:border-box;"></div>
<div style="left:582.16px;top:574.00px;width:4.83px;height:59.00px;background:#1787e0;border:1px solid #000;box-sizing:border-box;"></div>
<div style="left:594.17px;top:574.00px;width:8.41px;height:59.00px;background:#50e35c;border:1px solid #000;box-sizing:border-box;"></div>
<div style="left:601.58px;top:574.00px;width:3.81px;height:59.00px;background:#000;border:1px solid #000;box-sizing:border-box;"></div>
<div style="left:604.39px;top:574.00px;width:6.88px;height:59.00px;background:#8c30c4;border:1px solid #000;box-sizing:border-box;"></div>
<div style="left:610.27px;top:574.00px;width:8.41px;height:59.00px;background:#8c30c4;border:1px solid #000;box-sizing:border-box;"></div>
<div style="left:624.32px;top:574.00px;width:8.41px;height:59.00px;background:#8c30c4;border:1px solid #000;box-sizing:border-box;"></div>
<div style="left:631.74px;top:574.00px;width:5.34px;height:59.00px;background:#1787e0;border:1px solid #000;box-sizing:border-box;"></div>
<div style="left:644.51px;top:574.00px;width:8.67px;height:59.00px;background:#8c30c4;border:1px solid #000;box-sizing:border-box;"></div>
<div style="left:652.51px;top:574.00px;width:73.83px;height:59.00px;background:#8c30c4;border:1px solid #000;box-sizing:border-box;"></div>
<div style="left:725.34px;top:574.00px;width:3.31px;height:59.00px;background:#1787e0;border:1px solid #000;box-sizing:border-box;"></div>
<div style="left:737.77px;top:574.00px;width:8.51px;height:59.00px;background:#8c30c4;border:1px solid #000;box-sizing:border-box;"></div>
<div style="left:745.28px;top:574.00px;width:9.38px;height:59.00px;background:#8c30c4;border:1px solid #000;box-sizing:border-box;"></div>
<div style="left:753.66px;top:574.00px;width:3.31px;height:59.00px;background:#1787e0;border:1px solid #000;box-sizing:border-box;"></div>
<div style="left:758.58px;top:574.00px;width:3.31px;height:59.00px;background:#1787e0;border:1px solid #000;box-sizing:border-box;"></div>
<div style="left:760.89px;top:574.00px;width:3.89px;height:59.00px;background:#9ab4ee;border:1px solid #000;box-sizing:border-box;"></div>
<div style="left:763.78px;top:574.00px;width:9.38px;height:59.00px;background:#5d636c;border:1px solid #000;box-sizing:border-box;"></div>
<div style="left:772.16px;top:574.00px;width:8.80px;height:59.00px;background:#5d636c;border:1px solid #000;box-sizing:border-box;"></div>
<div style="left:780.00px;top:574.00px;width:3.00px;height:59.00px;background:#1787e0;border:1px solid #000;box-sizing:border-box;"></div>
<div style="left:785.45px;top:574.00px;width:5.34px;height:59.00px;background:#6a1c64;border:1px solid #000;box-sizing:border-box;"></div>
<div style="left:789.79px;top:574.00px;width:3.89px;height:59.00px;background:#6a1c64;border:1px solid #000;box-sizing:border-box;"></div>
<div style="left:792.68px;top:574.00px;width:3.89px;height:59.00px;background:#6a1c64;border:1px solid #000;box-sizing:border-box;"></div>
<div style="left:795.57px;top:574.00px;width:4.47px;height:59.00px;background:#6a1c64;border:1px solid #000;box-sizing:border-box;"></div>
<div style="left:799.04px;top:574.00px;width:3.89px;height:59.00px;background:#6a1c64;border:1px solid #000;box-sizing:border-box;"></div>
<div style="left:801.93px;top:574.00px;width:4.18px;height:59.00px;background:#6a1c64;border:1px solid #000;box-sizing:border-box;"></div>
<div style="left:805.00px;top:574.00px;width:3.00px;height:59.00px;background:#1787e0;border:1px solid #000;box-sizing:border-box;"></div>
<div style="left:806.84px;top:574.00px;width:4.18px;height:59.00px;background:#6a1c64;border:1px solid #000;box-sizing:border-box;"></div>
<div style="left:810.02px;top:574.00px;width:3.89px;height:59.00px;background:#6a1c64;border:1px solid #000;box-sizing:border-box;"></div>
<div style="left:812.91px;top:574.00px;width:4.47px;height:59.00px;background:#6a1c64;border:1px solid #000;box-sizing:border-box;"></div>
<div style="left:816.38px;top:574.00px;width:3.89px;height:59.00px;background:#6a1c64;border:1px solid #000;box-sizing:border-box;"></div>
<div style="left:819.27px;top:574.00px;width:3.89px;height:59.00px;background:#6a1c64;border:1px solid #000;box-sizing:border-box;"></div>
<div style="left:822.16px;top:574.00px;width:3.31px;height:59.00px;background:#1787e0;border:1px solid #000;box-sizing:border-box;"></div>
<div style="left:824.47px;top:574.00px;width:3.31px;height:59.00px;background:#6a1c64;border:1px solid #000;box-sizing:border-box;"></div>
<div style="left:832.56px;top:574.00px;width:4.47px;height:59.00px;background:#6a1c64;border:1px solid #000;box-sizing:border-box;"></div>
<div style="left:836.03px;top:574.00px;width:4.47px;height:59.00px;background:#6a1c64;border:1px solid #000;box-sizing:border-box;"></div>
<div style="left:839.50px;top:574.00px;width:3.89px;height:59.00px;background:#6a1c64;border:1px solid #000;box-sizing:border-box;"></div>
<div style="left:842.39px;top:574.00px;width:3.89px;height:59.00px;background:#6a1c64;border:1px solid #000;box-sizing:border-box;"></div>
<div style="left:845.28px;top:574.00px;width:4.47px;height:59.00px;background:#6a1c64;border:1px solid #000;box-sizing:border-box;"></div>
<div style="left:848.75px;top:574.00px;width:4.18px;height:59.00px;background:#6a1c64;border:1px solid #000;box-sizing:border-box;"></div>
<div style="left:852.00px;top:574.00px;width:3.00px;height:59.00px;background:#1787e0;border:1px solid #000;box-sizing:border-box;"></div>
<div style="left:853.95px;top:574.00px;width:6.20px;height:59.00px;background:#6a1c64;border:1px solid #000;box-sizing:border-box;"></div>
<div style="left:859.15px;top:574.00px;width:5.34px;height:59.00px;background:#6a1c64;border:1px solid #000;box-sizing:border-box;"></div>
<div style="left:863.49px;top:574.00px;width:4.47px;height:59.00px;background:#6a1c64;border:1px solid #000;box-sizing:border-box;"></div>
<div style="left:866.96px;top:574.00px;width:3.31px;height:59.00px;background:#1787e0;border:1px solid #000;box-sizing:border-box;"></div>
<div style="left:877.36px;top:574.00px;width:5.34px;height:59.00px;background:#6a1c64;border:1px solid #000;box-sizing:border-box;"></div>
<div style="left:881.70px;top:574.00px;width:4.47px;height:59.00px;background:#6a1c64;border:1px solid #000;box-sizing:border-box;"></div>
<div style="left:885.16px;top:574.00px;width:5.34px;height:59.00px;background:#6a1c64;border:1px solid #000;box-sizing:border-box;"></div>
<div style="left:889.50px;top:574.00px;width:3.89px;height:59.00px;background:#1787e0;border:1px solid #000;box-sizing:border-box;"></div>
<div style="left:892.39px;top:574.00px;width:3.89px;height:59.00px;background:#6a1c64;border:1px solid #000;box-sizing:border-box;"></div>
<div style="left:895.28px;top:574.00px;width:6.78px;height:59.00px;background:#6a1c64;border:1px solid #000;box-sizing:border-box;"></div>
<div style="left:785.95px;top:575.00px;width:41.33px;height:57.00px;background:rgba(0,0,0,0.25);"></div>
<div style="left:833.06px;top:575.00px;width:17.92px;height:57.00px;background:rgba(0,0,0,0.25);"></div>
<div style="left:658.00px;top:592.80px;font-size:10px;line-height:14px;letter-spacing:-0.100px;color:#fff;white-space:nowrap;">936<br>X141BQ</div>
<div style="left:449.70px;top:665.00px;width:8.20px;height:59.00px;background:#50e35c;border:1px solid #000;box-sizing:border-box;"></div>
<div style="left:456.90px;top:665.00px;width:23.20px;height:59.00px;background:#50e35c;border:1px solid #000;box-sizing:border-box;"></div>
<div style="left:479.10px;top:665.00px;width:27.80px;height:59.00px;background:#50e35c;border:1px solid #000;box-sizing:border-box;"></div>
<div style="left:505.90px;top:665.00px;width:28.60px;height:59.00px;background:#50e35c;border:1px solid #000;box-sizing:border-box;"></div>
<div style="left:533.50px;top:665.00px;width:27.00px;height:59.00px;background:#50e35c;border:1px solid #000;box-sizing:border-box;"></div>
<div style="left:559.50px;top:665.00px;width:183.00px;height:59.00px;background:#8c30c4;border:1px solid #000;box-sizing:border-box;"></div>
<div style="left:741.81px;top:665.00px;width:26.72px;height:59.00px;background:#5d636c;border:1px solid #000;box-sizing:border-box;"></div>
<div style="left:767.53px;top:665.00px;width:21.81px;height:59.00px;background:#6a1c64;border:1px solid #000;box-sizing:border-box;"></div>
<div style="left:788.34px;top:665.00px;width:3.89px;height:59.00px;background:#6a1c64;border:1px solid #000;box-sizing:border-box;"></div>
<div style="left:791.23px;top:665.00px;width:11.12px;height:59.00px;background:#6a1c64;border:1px solid #000;box-sizing:border-box;"></div>
<div style="left:801.35px;top:665.00px;width:7.36px;height:59.00px;background:#6a1c64;border:1px solid #000;box-sizing:border-box;"></div>
<div style="left:807.71px;top:665.00px;width:6.20px;height:59.00px;background:#6a1c64;border:1px solid #000;box-sizing:border-box;"></div>
<div style="left:812.91px;top:665.00px;width:9.67px;height:59.00px;background:#6a1c64;border:1px solid #000;box-sizing:border-box;"></div>
<div style="left:821.58px;top:665.00px;width:13.14px;height:59.00px;background:#6a1c64;border:1px solid #000;box-sizing:border-box;"></div>
<div style="left:833.72px;top:665.00px;width:6.20px;height:59.00px;background:#6a1c64;border:1px solid #000;box-sizing:border-box;"></div>
<div style="left:838.92px;top:665.00px;width:9.09px;height:59.00px;background:#6a1c64;border:1px solid #000;box-sizing:border-box;"></div>
<div style="left:847.01px;top:665.00px;width:10.83px;height:59.00px;background:#6a1c64;border:1px solid #000;box-sizing:border-box;"></div>
<div style="left:856.84px;top:665.00px;width:24.99px;height:59.00px;background:#6a1c64;border:1px solid #000;box-sizing:border-box;"></div>
<div style="left:880.83px;top:665.00px;width:17.47px;height:59.00px;background:#6a1c64;border:1px solid #000;box-sizing:border-box;"></div>
<div style="left:897.30px;top:665.00px;width:14.87px;height:59.00px;background:#6a1c64;border:1px solid #000;box-sizing:border-box;"></div>
<div style="left:462.00px;top:683.80px;width:12.00px;overflow:hidden;font-size:10px;line-height:14px;letter-spacing:-0.097px;color:#0b3a10;white-space:nowrap;">85<br>TY1</div>
<div style="left:484.30px;top:683.80px;width:16.50px;overflow:hidden;font-size:10px;line-height:14px;letter-spacing:-0.097px;color:#0b3a10;white-space:nowrap;">862<br>TY1</div>
<div style="left:511.50px;top:683.80px;width:16.50px;overflow:hidden;font-size:10px;line-height:14px;letter-spacing:-0.097px;color:#0b3a10;white-space:nowrap;">874<br>TY1</div>
<div style="left:539.00px;top:683.80px;width:12.00px;overflow:hidden;font-size:10px;line-height:14px;letter-spacing:-0.102px;color:#0b3a10;white-space:nowrap;">88<br>TY</div>
<div style="left:747.50px;top:683.80px;width:13.00px;overflow:hidden;font-size:10px;line-height:14px;letter-spacing:-0.094px;color:#fff;white-space:nowrap;">538<br>A14</div>
<div style="left:774.50px;top:683.80px;width:9.00px;overflow:hidden;font-size:10px;line-height:14px;letter-spacing:-0.075px;color:#fff;white-space:nowrap;">58<br>KI</div>
<div style="left:826.50px;top:683.80px;width:3.00px;overflow:hidden;font-size:10px;line-height:14px;letter-spacing:-0.044px;color:#fff;white-space:nowrap;">(<br>I</div>
<div style="left:862.50px;top:683.80px;width:12.00px;overflow:hidden;font-size:10px;line-height:14px;letter-spacing:-0.097px;color:#fff;white-space:nowrap;">703<br>KL</div>
<div style="left:886.50px;top:683.80px;font-size:10px;line-height:14px;letter-spacing:-0.106px;color:#fff;white-space:nowrap;">7<br>K</div>
<div style="left:450.20px;top:757.00px;width:20.50px;height:42.00px;background:#50e35c;border:1px solid #000;box-sizing:border-box;"></div>
<div style="left:469.70px;top:757.00px;width:22.70px;height:42.00px;background:#50e35c;border:1px solid #000;box-sizing:border-box;"></div>
<div style="left:491.40px;top:757.00px;width:28.80px;height:42.00px;background:#50e35c;border:1px solid #000;box-sizing:border-box;"></div>
<div style="left:519.20px;top:757.00px;width:28.10px;height:42.00px;background:#50e35c;border:1px solid #000;box-sizing:border-box;"></div>
<div style="left:546.30px;top:757.00px;width:22.70px;height:42.00px;background:#50e35c;border:1px solid #000;box-sizing:border-box;"></div>
<div style="left:568.00px;top:757.00px;width:28.90px;height:42.00px;background:#50e35c;border:1px solid #000;box-sizing:border-box;"></div>
<div style="left:595.90px;top:757.00px;width:12.00px;height:42.00px;background:#8c30c4;border:1px solid #000;box-sizing:border-box;"></div>
<div style="left:606.90px;top:757.00px;width:27.80px;height:42.00px;background:#8c30c4;border:1px solid #000;box-sizing:border-box;"></div>
<div style="left:633.70px;top:757.00px;width:99.30px;height:42.00px;background:#8c30c4;border:1px solid #000;box-sizing:border-box;"></div>
<div style="left:732.56px;top:757.00px;width:27.30px;height:42.00px;background:#a4b6f0;border:1px solid #000;box-sizing:border-box;"></div>
<div style="left:758.86px;top:757.00px;width:22.39px;height:42.00px;background:#5d636c;border:1px solid #000;box-sizing:border-box;"></div>
<div style="left:780.25px;top:757.00px;width:9.67px;height:42.00px;background:#6a1c64;border:1px solid #000;box-sizing:border-box;"></div>
<div style="left:788.92px;top:757.00px;width:9.96px;height:42.00px;background:#6a1c64;border:1px solid #000;box-sizing:border-box;"></div>
<div style="left:797.88px;top:757.00px;width:5.05px;height:42.00px;background:#6a1c64;border:1px solid #000;box-sizing:border-box;"></div>
<div style="left:801.93px;top:757.00px;width:9.09px;height:42.00px;background:#6a1c64;border:1px solid #000;box-sizing:border-box;"></div>
<div style="left:810.02px;top:757.00px;width:4.76px;height:42.00px;background:#6a1c64;border:1px solid #000;box-sizing:border-box;"></div>
<div style="left:813.78px;top:757.00px;width:10.25px;height:42.00px;background:#6a1c64;border:1px solid #000;box-sizing:border-box;"></div>
<div style="left:823.03px;top:757.00px;width:14.01px;height:42.00px;background:#6a1c64;border:1px solid #000;box-sizing:border-box;"></div>
<div style="left:836.03px;top:757.00px;width:4.76px;height:42.00px;background:#6a1c64;border:1px solid #000;box-sizing:border-box;"></div>
<div style="left:839.79px;top:757.00px;width:12.27px;height:42.00px;background:#6a1c64;border:1px solid #000;box-sizing:border-box;"></div>
<div style="left:851.06px;top:757.00px;width:17.18px;height:42.00px;background:#6a1c64;border:1px solid #000;box-sizing:border-box;"></div>
<div style="left:867.25px;top:757.00px;width:24.70px;height:42.00px;background:#6a1c64;border:1px solid #000;box-sizing:border-box;"></div>
<div style="left:890.95px;top:757.00px;width:21.23px;height:42.00px;background:#6a1c64;border:1px solid #000;box-sizing:border-box;"></div>
<div style="left:456.50px;top:767.00px;width:8.00px;overflow:hidden;font-size:10px;line-height:14px;letter-spacing:-0.102px;color:#0b3a10;white-space:nowrap;">84<br>TY</div>
<div style="left:475.50px;top:767.00px;width:11.50px;overflow:hidden;font-size:10px;line-height:14px;letter-spacing:-0.097px;color:#0b3a10;white-space:nowrap;">85<br>TY1</div>
<div style="left:497.50px;top:767.00px;width:16.50px;overflow:hidden;font-size:10px;line-height:14px;letter-spacing:-0.097px;color:#0b3a10;white-space:nowrap;">866<br>TY1</div>
<div style="left:525.00px;top:767.00px;width:16.50px;overflow:hidden;font-size:10px;line-height:14px;letter-spacing:-0.097px;color:#0b3a10;white-space:nowrap;">878<br>TY1</div>
<div style="left:552.00px;top:767.00px;width:11.50px;overflow:hidden;font-size:10px;line-height:14px;letter-spacing:-0.097px;color:#0b3a10;white-space:nowrap;">89<br>TY1</div>
<div style="left:574.00px;top:767.00px;width:16.50px;overflow:hidden;font-size:10px;line-height:14px;letter-spacing:-0.097px;color:#0b3a10;white-space:nowrap;">902<br>TY1</div>
<div style="left:612.50px;top:767.00px;width:17.00px;overflow:hidden;font-size:10px;line-height:14px;letter-spacing:-0.094px;color:#fff;white-space:nowrap;">926<br>X14</div>
<div style="left:640.00px;top:767.00px;font-size:10px;line-height:14px;letter-spacing:-0.100px;color:#fff;white-space:nowrap;">938<br>X141BQ</div>
<div style="left:738.50px;top:767.00px;width:15.00px;overflow:hidden;font-size:10px;line-height:14px;letter-spacing:-0.097px;color:#1c2440;white-space:nowrap;">998<br>R30</div>
<div style="left:766.00px;top:767.00px;width:8.50px;overflow:hidden;font-size:10px;line-height:14px;letter-spacing:-0.097px;color:#fff;white-space:nowrap;">54<br>A1</div>
<div style="left:828.50px;top:767.00px;width:3.00px;overflow:hidden;font-size:10px;line-height:14px;letter-spacing:-0.044px;color:#fff;white-space:nowrap;">(<br>I</div>
<div style="left:856.00px;top:767.00px;font-size:10px;line-height:14px;letter-spacing:-0.106px;color:#fff;white-space:nowrap;">6<br>K</div>
<div style="left:873.00px;top:767.00px;width:12.00px;overflow:hidden;font-size:10px;line-height:14px;letter-spacing:-0.097px;color:#fff;white-space:nowrap;">706<br>KL</div>
<div style="left:895.50px;top:767.00px;font-size:10px;line-height:14px;letter-spacing:-0.106px;color:#fff;white-space:nowrap;">7<br>K</div>
<div style="left:309.00px;top:799.00px;width:591.00px;height:15.00px;background:#cdcdcd;"></div>
<div style="left:309.00px;top:799.00px;width:18.00px;height:15.00px;background:#f0f0f0;"></div>
<svg style="left:316px;top:802px" width="6" height="9" viewBox="0 0 6 9"><path d="M4.6 0.8 L1.4 4.5 L4.6 8.2" fill="none" stroke="#606060" stroke-width="1"/></svg>
<div style="left:308.00px;top:816.00px;width:592.00px;height:1.00px;background:#b4b4b4;"></div>
<div style="left:706.00px;top:305.00px;width:187.00px;height:116.00px;box-sizing:border-box;background:#fbfbfc;border:1px solid #a3b3c4;border-radius:3px;box-shadow:0 0 1.5px rgba(110,125,150,0.55);overflow:hidden">
<div style="left:3.6px;top:3.6px;width:160.0px;height:11px;background-image:linear-gradient(#fbfbfc 1.75px,transparent 1.75px),linear-gradient(90deg,transparent 1.6px,#b9bbbf 1.6px);background-size:2.75px 2.78px;background-color:#fbfbfc"></div>
<svg style="left:168.6px;top:-0.4px" width="16" height="16" viewBox="0 0 16 16"><g fill="none" stroke="#1a1a1a" stroke-linecap="round"><path d="M6.1 6.2 L9.75 2.55" stroke-width="1.7"/><path d="M9.75 2.55 L12.9 5.3 L9.2 9.35" stroke-width="1" stroke-dasharray="1.2 0.6"/><path d="M3.1 5.7 L9.75 11.95" stroke-width="1"/><path d="M6.4 8.8 L2.1 13.1" stroke-width="1"/></g></svg>
<div style="left:1.5px;top:15.4px;width:182.0px;height:12.6px;background:#ececec"></div>
<div style="left:1.5px;top:28px;width:182.0px;height:60.4px;background:#f5f5f6"></div>
<div style="left:1.5px;top:88.4px;width:182.0px;height:25px;background:#ececec"></div>
</div>
<div style="left:711.20px;top:328.10px;width:5.00px;height:1.00px;background:#b4b4b8;"></div>
<div style="left:719.70px;top:322.15px;height:14px;line-height:14px;font-size:10.5px;letter-spacing:0.110px;color:#1c1c1c;white-space:nowrap;">DateTime</div>
<div style="left:716.60px;top:336.25px;height:14px;line-height:14px;font-size:10.5px;letter-spacing:0.098px;color:#1c1c1c;white-space:nowrap;">StartTime</div>
<div style="left:812.80px;top:336.00px;height:15px;line-height:15px;font-size:11px;letter-spacing:0.270px;color:#111;white-space:nowrap;font-weight:bold;">7/12/2012 4:26</div>
<div style="left:716.60px;top:350.75px;height:14px;line-height:14px;font-size:10.5px;letter-spacing:-0.018px;color:#1c1c1c;white-space:nowrap;">EndTime</div>
<div style="left:812.80px;top:350.50px;height:15px;line-height:15px;font-size:11px;letter-spacing:0.270px;color:#111;white-space:nowrap;font-weight:bold;">9/12/2012 0:56</div>
<div style="left:716.60px;top:365.25px;height:14px;line-height:14px;font-size:10.5px;letter-spacing:-0.021px;color:#1c1c1c;white-space:nowrap;">EarliestStartDate</div>
<div style="left:812.80px;top:365.00px;height:15px;line-height:15px;font-size:11px;letter-spacing:0.270px;color:#111;white-space:nowrap;font-weight:bold;">2/12/2012 0:00</div>
<div style="left:716.60px;top:379.75px;height:14px;line-height:14px;font-size:10.5px;letter-spacing:0.009px;color:#1c1c1c;white-space:nowrap;">DueDate</div>
<div style="left:812.80px;top:379.50px;height:15px;line-height:15px;font-size:11px;letter-spacing:0.270px;color:#111;white-space:nowrap;font-weight:bold;">7/12/2012 0:00</div>
<div style="left:711.00px;top:400.30px;width:5.00px;height:1.00px;background:#c8c8cc;"></div>
<div style="left:713.00px;top:398.30px;width:1.00px;height:5.00px;background:#c8c8cc;"></div>
<div style="left:719.70px;top:395.45px;height:14px;line-height:14px;font-size:10.5px;letter-spacing:0.272px;color:#1c1c1c;white-space:nowrap;">Details</div>
<div style="left:711.00px;top:413.40px;width:5.00px;height:1.00px;background:#c8c8cc;"></div>
<div style="left:713.00px;top:411.40px;width:1.00px;height:5.00px;background:#c8c8cc;"></div>
<div style="left:719.70px;top:408.25px;height:14px;line-height:14px;font-size:10.5px;letter-spacing:-0.020px;color:#1c1c1c;white-space:nowrap;">Misc</div>
<div style="left:459.60px;top:416.20px;width:187.00px;height:116.00px;box-sizing:border-box;background:#fbfbfc;border:1px solid #a3b3c4;border-radius:3px;box-shadow:0 0 1.5px rgba(110,125,150,0.55);overflow:hidden">
<div style="left:3.6px;top:3.6px;width:160.0px;height:11px;background-image:linear-gradient(#fbfbfc 1.75px,transparent 1.75px),linear-gradient(90deg,transparent 1.6px,#b9bbbf 1.6px);background-size:2.75px 2.78px;background-color:#fbfbfc"></div>
<svg style="left:168.6px;top:-0.4px" width="16" height="16" viewBox="0 0 16 16"><g fill="none" stroke="#1a1a1a" stroke-linecap="round"><path d="M6.1 6.2 L9.75 2.55" stroke-width="1.7"/><path d="M9.75 2.55 L12.9 5.3 L9.2 9.35" stroke-width="1" stroke-dasharray="1.2 0.6"/><path d="M3.1 5.7 L9.75 11.95" stroke-width="1"/><path d="M6.4 8.8 L2.1 13.1" stroke-width="1"/></g></svg>
<div style="left:1.5px;top:15.4px;width:182.0px;height:12.6px;background:#ececec"></div>
<div style="left:1.5px;top:28px;width:182.0px;height:60.4px;background:#f5f5f6"></div>
<div style="left:1.5px;top:88.4px;width:182.0px;height:25px;background:#ececec"></div>
</div>
<div style="left:464.80px;top:439.30px;width:5.00px;height:1.00px;background:#b4b4b8;"></div>
<div style="left:473.30px;top:433.35px;height:14px;line-height:14px;font-size:10.5px;letter-spacing:0.110px;color:#1c1c1c;white-space:nowrap;">DateTime</div>
<div style="left:470.20px;top:447.45px;height:14px;line-height:14px;font-size:10.5px;letter-spacing:0.098px;color:#1c1c1c;white-space:nowrap;">StartTime</div>
<div style="left:566.40px;top:447.20px;height:15px;line-height:15px;font-size:11px;letter-spacing:0.270px;color:#111;white-space:nowrap;font-weight:bold;">7/12/2012 0:43</div>
<div style="left:470.20px;top:461.95px;height:14px;line-height:14px;font-size:10.5px;letter-spacing:-0.018px;color:#1c1c1c;white-space:nowrap;">EndTime</div>
<div style="left:566.40px;top:461.70px;height:15px;line-height:15px;font-size:11px;letter-spacing:0.270px;color:#111;white-space:nowrap;font-weight:bold;">9/12/2012 9:27</div>
<div style="left:470.20px;top:476.45px;height:14px;line-height:14px;font-size:10.5px;letter-spacing:-0.021px;color:#1c1c1c;white-space:nowrap;">EarliestStartDate</div>
<div style="left:566.40px;top:476.20px;height:15px;line-height:15px;font-size:11px;letter-spacing:0.270px;color:#111;white-space:nowrap;font-weight:bold;">2/12/2012 0:00</div>
<div style="left:470.20px;top:490.95px;height:14px;line-height:14px;font-size:10.5px;letter-spacing:0.009px;color:#1c1c1c;white-space:nowrap;">DueDate</div>
<div style="left:566.40px;top:490.70px;height:15px;line-height:15px;font-size:11px;letter-spacing:0.270px;color:#111;white-space:nowrap;font-weight:bold;">7/12/2012 0:00</div>
<div style="left:464.60px;top:511.50px;width:5.00px;height:1.00px;background:#c8c8cc;"></div>
<div style="left:466.60px;top:509.50px;width:1.00px;height:5.00px;background:#c8c8cc;"></div>
<div style="left:473.30px;top:506.65px;height:14px;line-height:14px;font-size:10.5px;letter-spacing:0.272px;color:#1c1c1c;white-space:nowrap;">Details</div>
<div style="left:464.60px;top:524.60px;width:5.00px;height:1.00px;background:#c8c8cc;"></div>
<div style="left:466.60px;top:522.60px;width:1.00px;height:5.00px;background:#c8c8cc;"></div>
<div style="left:473.30px;top:519.45px;height:14px;line-height:14px;font-size:10.5px;letter-spacing:-0.020px;color:#1c1c1c;white-space:nowrap;">Misc</div>
<div style="left:461.10px;top:518.20px;width:13.50px;height:13.00px;border:1px dotted #444;box-sizing:border-box;"></div>
<div style="left:680.50px;top:477.50px;width:187.00px;height:116.00px;box-sizing:border-box;background:#fbfbfc;border:1px solid #a3b3c4;border-radius:3px;box-shadow:0 0 1.5px rgba(110,125,150,0.55);overflow:hidden">
<div style="left:3.6px;top:3.6px;width:160.0px;height:11px;background-image:linear-gradient(#fbfbfc 1.75px,transparent 1.75px),linear-gradient(90deg,transparent 1.6px,#b9bbbf 1.6px);background-size:2.75px 2.78px;background-color:#fbfbfc"></div>
<svg style="left:168.6px;top:-0.4px" width="16" height="16" viewBox="0 0 16 16"><g fill="none" stroke="#1a1a1a" stroke-linecap="round"><path d="M6.1 6.2 L9.75 2.55" stroke-width="1.7"/><path d="M9.75 2.55 L12.9 5.3 L9.2 9.35" stroke-width="1" stroke-dasharray="1.2 0.6"/><path d="M3.1 5.7 L9.75 11.95" stroke-width="1"/><path d="M6.4 8.8 L2.1 13.1" stroke-width="1"/></g></svg>
<div style="left:1.5px;top:15.4px;width:182.0px;height:12.6px;background:#ececec"></div>
<div style="left:1.5px;top:28px;width:182.0px;height:60.4px;background:#f5f5f6"></div>
<div style="left:1.5px;top:88.4px;width:182.0px;height:25px;background:#ececec"></div>
</div>
<div style="left:685.70px;top:500.60px;width:5.00px;height:1.00px;background:#b4b4b8;"></div>
<div style="left:694.20px;top:494.65px;height:14px;line-height:14px;font-size:10.5px;letter-spacing:0.110px;color:#1c1c1c;white-space:nowrap;">DateTime</div>
<div style="left:691.10px;top:508.75px;height:14px;line-height:14px;font-size:10.5px;letter-spacing:0.098px;color:#1c1c1c;white-space:nowrap;">StartTime</div>
<div style="left:787.30px;top:508.50px;height:15px;line-height:15px;font-size:11px;letter-spacing:0.270px;color:#111;white-space:nowrap;font-weight:bold;">7/12/2012 4:26</div>
<div style="left:691.10px;top:523.25px;height:14px;line-height:14px;font-size:10.5px;letter-spacing:-0.018px;color:#1c1c1c;white-space:nowrap;">EndTime</div>
<div style="left:787.30px;top:523.00px;height:15px;line-height:15px;font-size:11px;letter-spacing:0.270px;color:#111;white-space:nowrap;font-weight:bold;">9/12/2012 0:56</div>
<div style="left:691.10px;top:537.75px;height:14px;line-height:14px;font-size:10.5px;letter-spacing:-0.021px;color:#1c1c1c;white-space:nowrap;">EarliestStartDate</div>
<div style="left:787.30px;top:537.50px;height:15px;line-height:15px;font-size:11px;letter-spacing:0.270px;color:#111;white-space:nowrap;font-weight:bold;">2/12/2012 0:00</div>
<div style="left:691.10px;top:552.25px;height:14px;line-height:14px;font-size:10.5px;letter-spacing:0.009px;color:#1c1c1c;white-space:nowrap;">DueDate</div>
<div style="left:787.30px;top:552.00px;height:15px;line-height:15px;font-size:11px;letter-spacing:0.270px;color:#111;white-space:nowrap;font-weight:bold;">7/12/2012 0:00</div>
<div style="left:685.50px;top:572.80px;width:5.00px;height:1.00px;background:#c8c8cc;"></div>
<div style="left:687.50px;top:570.80px;width:1.00px;height:5.00px;background:#c8c8cc;"></div>
<div style="left:694.20px;top:567.95px;height:14px;line-height:14px;font-size:10.5px;letter-spacing:0.272px;color:#1c1c1c;white-space:nowrap;">Details</div>
<div style="left:685.50px;top:585.90px;width:5.00px;height:1.00px;background:#c8c8cc;"></div>
<div style="left:687.50px;top:583.90px;width:1.00px;height:5.00px;background:#c8c8cc;"></div>
<div style="left:694.20px;top:580.75px;height:14px;line-height:14px;font-size:10.5px;letter-spacing:-0.020px;color:#1c1c1c;white-space:nowrap;">Misc</div>
<div style="left:544.30px;top:630.00px;width:193.50px;height:116.00px;box-sizing:border-box;background:#fbfbfc;border:1px solid #a3b3c4;border-radius:3px;box-shadow:0 0 1.5px rgba(110,125,150,0.55);overflow:hidden">
<div style="left:3.6px;top:3.6px;width:166.5px;height:11px;background-image:linear-gradient(#fbfbfc 1.75px,transparent 1.75px),linear-gradient(90deg,transparent 1.6px,#b9bbbf 1.6px);background-size:2.75px 2.78px;background-color:#fbfbfc"></div>
<svg style="left:175.1px;top:-0.4px" width="16" height="16" viewBox="0 0 16 16"><g fill="none" stroke="#1a1a1a" stroke-linecap="round"><path d="M6.1 6.2 L9.75 2.55" stroke-width="1.7"/><path d="M9.75 2.55 L12.9 5.3 L9.2 9.35" stroke-width="1" stroke-dasharray="1.2 0.6"/><path d="M3.1 5.7 L9.75 11.95" stroke-width="1"/><path d="M6.4 8.8 L2.1 13.1" stroke-width="1"/></g></svg>
<div style="left:1.5px;top:15.4px;width:188.5px;height:12.6px;background:#ececec"></div>
<div style="left:1.5px;top:28px;width:188.5px;height:60.4px;background:#f5f5f6"></div>
<div style="left:1.5px;top:88.4px;width:188.5px;height:25px;background:#ececec"></div>
</div>
<div style="left:549.50px;top:653.10px;width:5.00px;height:1.00px;background:#b4b4b8;"></div>
<div style="left:558.00px;top:647.15px;height:14px;line-height:14px;font-size:10.5px;letter-spacing:0.110px;color:#1c1c1c;white-space:nowrap;">DateTime</div>
<div style="left:554.90px;top:661.25px;height:14px;line-height:14px;font-size:10.5px;letter-spacing:0.098px;color:#1c1c1c;white-space:nowrap;">StartTime</div>
<div style="left:651.10px;top:661.00px;height:15px;line-height:15px;font-size:11px;letter-spacing:0.272px;color:#111;white-space:nowrap;font-weight:bold;">3/12/2012 10:54</div>
<div style="left:554.90px;top:675.75px;height:14px;line-height:14px;font-size:10.5px;letter-spacing:-0.018px;color:#1c1c1c;white-space:nowrap;">EndTime</div>
<div style="left:651.10px;top:675.50px;height:15px;line-height:15px;font-size:11px;letter-spacing:0.270px;color:#111;white-space:nowrap;font-weight:bold;">4/12/2012 4:01</div>
<div style="left:554.90px;top:690.25px;height:14px;line-height:14px;font-size:10.5px;letter-spacing:-0.021px;color:#1c1c1c;white-space:nowrap;">EarliestStartDate</div>
<div style="left:651.10px;top:690.00px;height:15px;line-height:15px;font-size:11px;letter-spacing:0.270px;color:#111;white-space:nowrap;font-weight:bold;">2/12/2012 0:00</div>
<div style="left:554.90px;top:704.75px;height:14px;line-height:14px;font-size:10.5px;letter-spacing:0.009px;color:#1c1c1c;white-space:nowrap;">DueDate</div>
<div style="left:651.10px;top:704.50px;height:15px;line-height:15px;font-size:11px;letter-spacing:0.270px;color:#111;white-space:nowrap;font-weight:bold;">7/12/2012 0:00</div>
<div style="left:549.30px;top:725.30px;width:5.00px;height:1.00px;background:#c8c8cc;"></div>
<div style="left:551.30px;top:723.30px;width:1.00px;height:5.00px;background:#c8c8cc;"></div>
<div style="left:558.00px;top:720.45px;height:14px;line-height:14px;font-size:10.5px;letter-spacing:0.272px;color:#1c1c1c;white-space:nowrap;">Details</div>
<div style="left:549.30px;top:738.40px;width:5.00px;height:1.00px;background:#c8c8cc;"></div>
<div style="left:551.30px;top:736.40px;width:1.00px;height:5.00px;background:#c8c8cc;"></div>
<div style="left:558.00px;top:733.25px;height:14px;line-height:14px;font-size:10.5px;letter-spacing:-0.020px;color:#1c1c1c;white-space:nowrap;">Misc</div>
<svg style="left:876px;top:639px" width="14" height="20" viewBox="0 0 14 20"><path d="M1.5 1.5 L1.5 15.5 L4.8 12.4 L7.2 17.8 L9.4 16.8 L7 11.6 L11.5 11.6 Z" fill="#fff" stroke="#000" stroke-width="1"/></svg>
<div style="left:0.00px;top:817.00px;width:900.00px;height:19.00px;background:linear-gradient(#e8ebee,#c6cad1);"></div>
<div style="left:3.40px;top:822.65px;height:14px;line-height:14px;font-size:10.5px;letter-spacing:0.250px;color:#1e2a3a;white-space:nowrap;">Mixing Tank</div>
<div style="left:64.60px;top:820.00px;width:1.00px;height:16.00px;background:#aab0b8;"></div>
<div style="left:69.00px;top:822.65px;height:14px;line-height:14px;font-size:10.5px;letter-spacing:0.130px;color:#1e2a3a;white-space:nowrap;">12/12/2012 21:26:52</div>
</body></html>
